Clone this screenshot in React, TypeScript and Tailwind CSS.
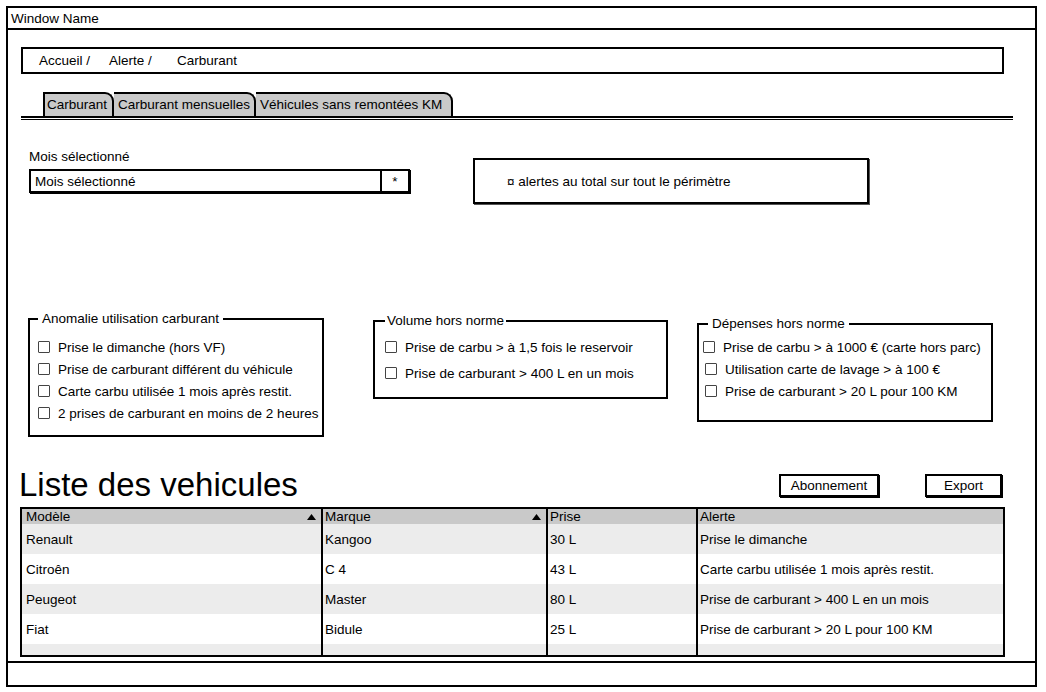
import React from "react";

const Check = ({ label, cls = "" }: { label: string; cls?: string }) => (
  <div className={"flex items-center gap-[8px] " + cls}>
    <span className="w-[12px] h-[12px] border border-[#444] rounded-[1px] bg-white shrink-0" />
    <span className="whitespace-nowrap">{label}</span>
  </div>
);

const Arrow = () => (
  <svg width="9" height="6" viewBox="0 0 9 6" className="mr-[5px]">
    <path d="M0 6 L4.5 0 L9 6 Z" fill="#000" />
  </svg>
);

const rows = [
  ["Renault", "Kangoo", "30 L", "Prise le dimanche"],
  ["Citroên", "C 4", "43 L", "Carte carbu utilisée 1 mois après restit."],
  ["Peugeot", "Master", "80 L", "Prise de carburant > 400 L en un mois"],
  ["Fiat", "Bidule", "25 L", "Prise de carburant > 20 L pour 100 KM"],
];

export default function App() {
  return (
    <div className="w-[1046px] h-[692px] bg-white pt-[6px] pl-[6px] text-black text-[13.5px] leading-[15px] font-['Liberation_Sans',Arial,sans-serif]">
      <div className="w-[1031px] h-[681px] border-2 border-black flex flex-col">
        {/* title bar */}
        <div className="h-[22px] border-b-2 border-black pl-[3px] flex items-center">Window Name</div>

        {/* content */}
        <div className="flex-1 flex flex-col pl-[13px]">
          {/* breadcrumb */}
          <div className="mt-[17px] w-[983px] h-[27px] border-2 border-black flex items-center pl-[16px] pb-[1px]">
            <span className="w-[70px]">Accueil /</span>
            <span className="w-[68px]">Alerte /</span>
            <span>Carburant</span>
          </div>

          {/* tabs */}
          <div className="mt-[18px] flex pl-[22px] h-[24px]">
            <div className="w-[71px] h-[24px] bg-[#c9c9c9] border-t-2 border-l-2 border-r-2 border-black rounded-tr-[9px] pl-[2px] pb-[2px] flex items-center">Carburant</div>
            <div className="w-[142px] h-[24px] bg-[#c9c9c9] border-t-2 border-r-2 border-black rounded-tr-[9px] pl-[4px] pb-[2px] flex items-center">Carburant mensuelles</div>
            <div className="w-[197px] h-[24px] bg-[#c9c9c9] border-t-2 border-r-2 border-black rounded-tr-[9px] pl-[4px] pb-[2px] flex items-center">Véhicules sans remontées KM</div>
          </div>
          <div className="w-[992px] h-[4px] border-t-2 border-b border-black" />

          {/* month + alert */}
          <div className="mt-[29px] flex items-start">
            <div className="pl-[8px] flex flex-col">
              <span>Mois sélectionné</span>
              <div className="mt-[5px] w-[381px] h-[24px] border-2 border-black shadow-[1px_1px_0_#000] flex">
                <div className="flex-1 pl-[4px] flex items-center">Mois sélectionné</div>
                <div className="w-[28px] border-l-2 border-black flex items-center justify-center">*</div>
              </div>
            </div>
            <div className="ml-[63px] mt-[9px] w-[396px] h-[46px] border-2 border-black shadow-[1px_1px_0_#555] pl-[32px] flex items-center">
              ¤ alertes au total sur tout le périmètre
            </div>
          </div>

          {/* groups */}
          <div className="mt-[107px] flex items-start">
            <fieldset className="ml-[7px] w-[296px] h-[126px] border-2 border-black pl-[8px] pt-[10px]">
              <legend className="px-[4px]">Anomalie utilisation carburant</legend>
              <Check cls="h-[22px]" label="Prise le dimanche (hors VF)" />
              <Check cls="h-[22px]" label="Prise de carburant différent du véhicule" />
              <Check cls="h-[22px]" label="Carte carbu utilisée 1 mois après restit." />
              <Check cls="h-[22px]" label="2 prises de carburant en moins de 2 heures" />
            </fieldset>
            <fieldset className="ml-[49px] mt-[2px] w-[295px] h-[86px] border-2 border-black pl-[10px] pt-[6px]">
              <legend className="px-[2px]">Volume hors norme</legend>
              <Check cls="h-[26px]" label="Prise de carbu > à 1,5 fois le reservoir" />
              <Check cls="h-[26px]" label="Prise de carburant > 400 L en un mois" />
            </fieldset>
            <fieldset className="ml-[29px] mt-[5px] w-[296px] h-[106px] border-2 border-black pl-[4px] pt-[5px]">
              <legend className="ml-[5px] px-[4px]">Dépenses hors norme</legend>
              <Check cls="h-[22px]" label="Prise de carbu > à 1000 € (carte hors parc)" />
              <Check cls="h-[22px] pl-[2px]" label="Utilisation carte de lavage > à 100 €" />
              <Check cls="h-[22px] pl-[2px]" label="Prise de carburant > 20 L pour 100 KM" />
            </fieldset>
          </div>

          {/* heading + buttons */}
          <div className="mt-[30px] h-[36px] w-[983px] flex items-center">
            <h1 className="flex-1 ml-[-2px] text-[33px] leading-[36px]">Liste des vehicules</h1>
            <button className="w-[100px] h-[23px] border-2 border-black shadow-[1px_1px_0_#000] flex items-center justify-center">Abonnement</button>
            <button className="ml-[46px] mr-[2px] w-[77px] h-[23px] border-2 border-black shadow-[1px_1px_0_#000] flex items-center justify-center">Export</button>
          </div>

          {/* table */}
          <div className="mt-[4px] ml-[-1px] w-[985px] h-[150px] border-2 border-black flex flex-col overflow-hidden bg-[#ececec]">
            <div className="h-[15px] flex bg-[#c9c9c9] shrink-0">
              <div className="w-[301px] border-r-2 border-black pl-[4px] flex items-center justify-between">
                <span>Modèle</span>
                <Arrow />
              </div>
              <div className="w-[225px] border-r-2 border-black pl-[2px] flex items-center justify-between">
                <span>Marque</span>
                <Arrow />
              </div>
              <div className="w-[150px] border-r-2 border-black pl-[2px] flex items-center">Prise</div>
              <div className="flex-1 pl-[2px] flex items-center">Alerte</div>
            </div>
            {rows.map((r, i) => (
              <div key={i} className={"h-[30px] flex shrink-0 " + (i % 2 === 0 ? "bg-[#ececec]" : "bg-white")}>
                <div className="w-[301px] border-r-2 border-black pl-[4px] flex items-center">{r[0]}</div>
                <div className="w-[225px] border-r-2 border-black pl-[2px] flex items-center">{r[1]}</div>
                <div className="w-[150px] border-r-2 border-black pl-[2px] flex items-center">{r[2]}</div>
                <div className="flex-1 pl-[2px] flex items-center">{r[3]}</div>
              </div>
            ))}
            <div className="flex-1 flex">
              <div className="w-[301px] border-r-2 border-black" />
              <div className="w-[225px] border-r-2 border-black" />
              <div className="w-[150px] border-r-2 border-black" />
              <div className="flex-1" />
            </div>
          </div>
        </div>

        {/* status bar */}
        <div className="h-[24px] border-t-2 border-black" />
      </div>
    </div>
  );
}
